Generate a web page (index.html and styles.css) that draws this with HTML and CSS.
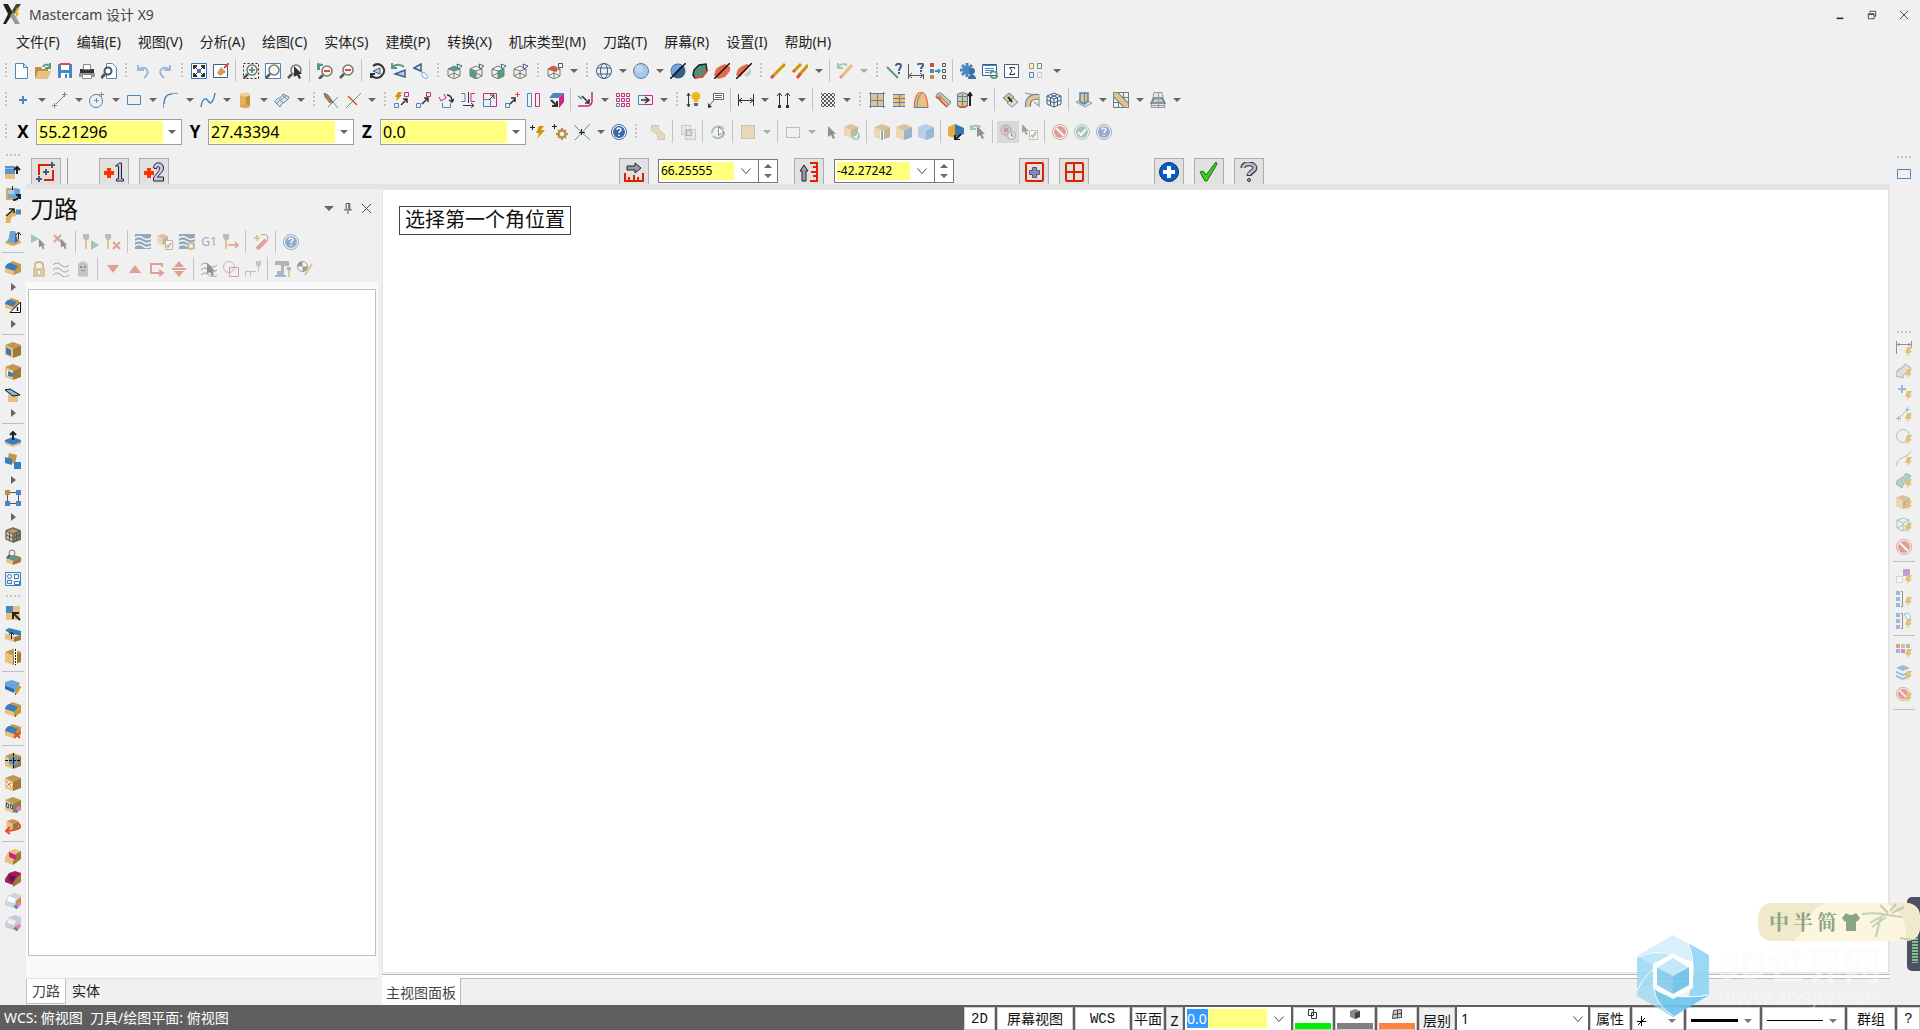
FILE: index.html
```html
<!DOCTYPE html>
<html lang="zh-CN">
<head>
<meta charset="utf-8">
<title>Mastercam 设计 X9</title>
<link rel="stylesheet" href="styles.css">
</head>
<body>
<svg class="sprite" aria-hidden="true">
<defs>
<!-- shared parts -->
<symbol id="cube" viewBox="0 0 16 16"><path fill="#c09850" d="M8 0l8 3-8 4-8-4z"/><path fill="#e8c080" d="M0 3l8 4v9l-8-3z"/><path fill="#a07838" d="M16 3L8 7v9l8-3z"/></symbol>
<symbol id="bolt" viewBox="0 0 16 16"><path fill="#cc9900" d="M11 6h5l-2 4h2l-6 6 2-4H9z"/></symbol>
<symbol id="wirecube" viewBox="0 0 16 16"><path fill="none" stroke="#777" d="M7 3l6 3v7l-6 3-6-3V6zM1 6l6 2 6-2M7 8v8M1 13l6-3 6 3"/></symbol>
<symbol id="mark" viewBox="0 0 16 16"><path fill="#fff" stroke="#3a5f85" d="M10 1l5 2-4 3z"/></symbol>
<symbol id="cursor" viewBox="0 0 16 16"><path fill="#333" d="M6 2v11l3-2 2 4 2-1-2-4h3z"/></symbol>
<symbol id="pen" viewBox="0 0 16 16"><path stroke="#d09a20" stroke-width="3" d="M15 7l-4 7"/><path stroke="#333" d="M11 14l-1 2"/></symbol>
<symbol id="eraser" viewBox="0 0 16 16"><path stroke="#e080b8" stroke-width="4" d="M15 10l-3 3"/><path stroke="#4a86c0" stroke-width="4" d="M12 13l-2 2"/></symbol>
<symbol id="lens" viewBox="0 0 16 16"><circle cx="9" cy="7" r="5" fill="#f6f6f6" stroke="#777" stroke-width="1.5"/><path stroke="#555" stroke-width="2.5" d="M5 11l-4 4"/></symbol>
<!-- file and view -->
<symbol id="new" viewBox="0 0 16 16"><path fill="#fff" stroke="#4a86c0" d="M2.500.5h8l4 4v11h-12zM10.500.5v4h4"/></symbol>
<symbol id="open" viewBox="0 0 16 16"><path fill="#c09040" d="M0 4h6l1 2h6v9H0z"/><path fill="#e8c080" d="M3 8h13l-3 8H0z"/><path fill="none" stroke="#5a9a80" stroke-width="2" d="M8 4c1-3 4-3 6-1M15 0v5h-5"/></symbol>
<symbol id="save" viewBox="0 0 16 16"><path fill="#4a86c0" d="M1 1h14v14H1z"/><path fill="#fff" d="M4 1h8v6H4zM4 10h8v5H4z"/><path fill="#e05030" d="M3 0h10v2H3z"/><path fill="#4a86c0" d="M8 11h2v4H8z"/></symbol>
<symbol id="print" viewBox="0 0 16 16"><path fill="#333" d="M1 6h14v5H1z"/><path fill="#999" d="M0 10h16v4H0z"/><path fill="#fff" stroke="#888" d="M4.500 1.500h7v5h-7zM3.500 11.500h9v4h-9z"/></symbol>
<symbol id="preview" viewBox="0 0 16 16"><path fill="#fff" stroke="#4a86c0" d="M5.500.5h6l4 4v11h-10z"/><circle cx="7" cy="8" r="3.500" fill="#fff" stroke="#555" stroke-width="2"/><path stroke="#555" stroke-width="3" d="M4 11l-4 4"/></symbol>
<symbol id="undo" viewBox="0 0 16 16"><path fill="none" stroke="#4a86c0" stroke-width="2" d="M4 6c8-4 12 3 5 9M3 2v5h6"/></symbol>
<symbol id="redo" viewBox="0 0 16 16"><path fill="none" stroke="#4a86c0" stroke-width="2" d="M12 6C4 2 0 9 7 15M13 2v5H7"/></symbol>
<symbol id="fit" viewBox="0 0 16 16"><path fill="#fff" stroke="#3a76b0" d="M.5.5h15v15H.5z"/><path stroke="#333" d="M3 3l10 10M13 3L3 13"/><path fill="none" stroke="#333" stroke-width="2" d="M3 6V3h3M10 3h3v3M13 10v3h-3M6 13H3v-3"/><path fill="#3a76b0" d="M6 6h4v4H6z"/></symbol>
<symbol id="repaint" viewBox="0 0 16 16"><path fill="#fff" stroke="#3a5f85" d="M.5 1.500h14v13H.5z"/><path fill="#d0a050" d="M8 4l5 5-6 4-3-3z"/><path stroke="#e05030" stroke-width="2" d="M11 5l5-5"/></symbol>
<symbol id="zoomwin" viewBox="0 0 16 16"><path fill="none" stroke="#222" stroke-dasharray="2 2" d="M.5.5h15v15H.5z"/><use href="#lens"/><path stroke="#5a9a80" stroke-width="2" d="M9 4v6M6 7h6"/></symbol>
<symbol id="zoomtgt" viewBox="0 0 16 16"><path fill="#fff" stroke="#4a86c0" d="M.5.5h15v15H.5z"/><use href="#lens"/></symbol>
<symbol id="zoomsel" viewBox="0 0 16 16"><use href="#lens"/><use href="#cursor" x="1" y="1"/></symbol>
<symbol id="unzoom" viewBox="0 0 16 16"><use href="#lens" x="1" y="1"/><path stroke="#e05030" stroke-width="2" d="M7 8h6"/><path fill="#5a9a80" d="M0 0l6 1v2H3v4H0z"/></symbol>
<symbol id="zoomout" viewBox="0 0 16 16"><use href="#lens"/><path stroke="#e05030" stroke-width="2" d="M6 7h6"/></symbol>
<symbol id="rot1" viewBox="0 0 16 16"><path fill="none" stroke="#333" stroke-width="2" d="M4 3c6-5 14 2 10 8-3 5-9 5-12 1M2 15v-4h4"/><path fill="#b8d0e8" stroke="#3a5f85" d="M4 8l7-3v6z"/></symbol>
<symbol id="rot2" viewBox="0 0 16 16"><path fill="none" stroke="#5a9a80" stroke-width="2" d="M1 4c4-3 9-3 12 0M1 0v5h5"/><path fill="#b8d0e8" stroke="#3a5f85" stroke-width="1.500" d="M4 11l10-4v7z"/></symbol>
<symbol id="rot3" viewBox="0 0 16 16"><path fill="#e8eef5" stroke="#3a5f85" stroke-width="1.500" d="M1 5l7-4v7z"/><path fill="#fff" stroke="#7aa6d0" d="M9 9l3 1 3 4-2 2-4-3z"/></symbol>
<symbol id="vtop" viewBox="0 0 16 16"><use href="#wirecube"/><path fill="#5a9a80" d="M7 3l6 3-6 2-6-2z"/><use href="#mark"/></symbol>
<symbol id="vfront" viewBox="0 0 16 16"><use href="#wirecube"/><path fill="#5a9a80" d="M1 6l6 2v8l-6-3z"/><use href="#mark"/></symbol>
<symbol id="vright" viewBox="0 0 16 16"><use href="#wirecube"/><path fill="#5a9a80" d="M13 6L7 8v8l6-3z"/><use href="#mark"/></symbol>
<symbol id="viso" viewBox="0 0 16 16"><use href="#wirecube"/><use href="#mark"/></symbol>
<symbol id="plane" viewBox="0 0 16 16"><use href="#wirecube"/><path fill="#e05030" d="M5 3l5 2v4l-9-3z"/><path fill="#fff" stroke="#555" d="M11.500.5h4v4h-4z"/></symbol>
<symbol id="globe" viewBox="0 0 16 16"><g fill="none" stroke="#3a5f85"><circle cx="8" cy="8" r="7.500"/><ellipse cx="8" cy="8" rx="3.500" ry="7.500"/><path d="M1 5h14M1 11h14"/></g></symbol>
<symbol id="ball" viewBox="0 0 16 16"><circle cx="8" cy="8" r="7.500" fill="#a8c6e6" stroke="#5a7ea5"/><circle cx="6" cy="6" r="4" fill="#bfd7ef"/></symbol>
<symbol id="ballcut" viewBox="0 0 16 16"><circle cx="8" cy="8" r="7.500" fill="#35618f"/><path fill="#70a8dc" d="M2 12C-1 6 4-1 12 2z"/><path stroke="#111" stroke-width="1.500" d="M0 16L16 0"/></symbol>
<symbol id="gem" viewBox="0 0 16 16"><path fill="#50907a" stroke="#222" stroke-width="1.500" d="M2 7l5-5 7-1 1 7-5 6-7 1-2-3z"/><path fill="none" stroke="#e05030" stroke-width="2" d="M15 8l-5 6H3"/></symbol>
<symbol id="hidea" viewBox="0 0 16 16"><path fill="#e56a4a" d="M6 3l5-2 5 3v4l-5 6-7 2-4-4 2-6z"/><path stroke="#111" stroke-width="1.500" d="M0 16L16 0"/></symbol>
<symbol id="hideb" viewBox="0 0 16 16"><path fill="#e56a4a" d="M6 3l5-2 3 2L4 14l-4-2 2-6z"/><path fill="#ccc" d="M8 12l7-7v6l-4 3z"/><path stroke="#111" stroke-width="1.500" d="M0 16L16 0"/></symbol>
<symbol id="del" viewBox="0 0 16 16"><path stroke="#cc9900" stroke-width="3" d="M15 1L4 12"/><path stroke="#e05030" stroke-width="3" d="M4 12l-3 3"/></symbol>
<symbol id="del2" viewBox="0 0 16 16"><path stroke="#cc9900" stroke-width="3" d="M9 1L3 7M16 2L9 10"/><path stroke="#e05030" stroke-width="3" d="M3 7l-2 2M9 10l-4 5"/></symbol>
<symbol id="undel" viewBox="0 0 16 16"><path stroke="#cc9900" stroke-width="3" d="M15 2L6 12"/><path stroke="#e05030" stroke-width="3" d="M6 12l-3 3"/><path fill="none" stroke="#5a9a80" stroke-width="2" d="M1 0v5h5M1 4c3-4 6-3 9-2"/></symbol>
<symbol id="anaent" viewBox="0 0 16 16"><path stroke="#5a9a80" stroke-width="2" d="M1 4l11 11"/><path fill="none" stroke="#3a5f85" stroke-width="2" d="M10 3c0-3 5-3 5 0 0 2-2 2-2 5M13 9v2"/></symbol>
<symbol id="anadist" viewBox="0 0 16 16"><path fill="none" stroke="#555" d="M.5 1v15M15.500 11v5M2 12.500h12M4 10l-3 2.500L4 15M12 10l3 2.500-3 2.500"/><path fill="none" stroke="#3a5f85" stroke-width="2" d="M10 2c0-2 5-2 5 0 0 2-2 2-2 4M13 7v2"/></symbol>
<symbol id="anachg" viewBox="0 0 16 16"><path fill="#d05030" d="M0 0h4v4H0z"/><path fill="#4a86c0" d="M0 6h4v4H0zM5 7h3V5l3 3-3 3V9H5z"/><path fill="#c09040" d="M0 12h4v4H0z"/><path fill="none" stroke="#555" d="M12.500.5h3v3h-3zM12.500 6.500h3v3h-3zM12.500 12.500h3v3h-3z"/></symbol>
<symbol id="config" viewBox="0 0 16 16"><g stroke="#4a86c0" stroke-width="3"><path d="M7 0v14M0 7h14M2 2l10 10M12 2L2 12"/></g><circle cx="12" cy="8" r="3" fill="#3a6fa5"/><path fill="#3a6fa5" d="M8 16c0-6 8-6 8 0z"/></symbol>
<symbol id="runapp" viewBox="0 0 16 16"><path fill="#fff" stroke="#3a5f85" d="M.5 1.500h14v11H.5z"/><path stroke="#4a86c0" d="M0 2.500h15M3 5.500h9M3 7.500h9M3 9.500h4"/><path fill="none" stroke="#5a9a80" stroke-width="2" d="M8 11c2-4 6-3 7 0M16 12c-2 4-6 4-7 1"/></symbol>
<symbol id="sigma" viewBox="0 0 16 16"><path fill="#fff" stroke="#3a5f85" d="M.5 1.500h14v13H.5z"/><path fill="none" stroke="#333" d="M10.500 6V4.500h-5L8 8l-2.500 3.500h5V10"/></symbol>
<symbol id="grid4" viewBox="0 0 16 16"><g fill="none"><path stroke="#c09040" d="M1.500.5h4v5h-4z"/><path stroke="#5a9a80" d="M9.500.5h4v5h-4z"/><path stroke="#4a86c0" d="M1.500 9.500h4v5h-4z"/><path stroke="#ccc" d="M9.500 9.500h4v5h-4z"/></g></symbol>
<!-- sketch and transform -->
<symbol id="point" viewBox="0 0 16 16"><path stroke="#4a86c0" stroke-width="2" d="M8 4v8M4 8h8"/></symbol>
<symbol id="line" viewBox="0 0 16 16"><path stroke="#4a86c0" d="M4 12l9-9"/><path stroke="#888" d="M12.500 0v5M10 2.500h5M2.500 11v5M0 13.500h5"/></symbol>
<symbol id="circle" viewBox="0 0 16 16"><circle cx="7" cy="9" r="6.500" fill="none" stroke="#4a86c0"/><path stroke="#888" d="M7.500 6v5M5 8.500h5M12.500 0v5M10 2.500h5"/></symbol>
<symbol id="rect" viewBox="0 0 16 16"><path fill="none" stroke="#4a86c0" d="M1.500 3.500h13v9h-13z"/></symbol>
<symbol id="fillet" viewBox="0 0 16 16"><path fill="none" stroke="#4a86c0" stroke-width="1.500" d="M1 12C1 5 4 2 9 2"/><path stroke="#999" d="M.5 11v5M8 1.500h7"/></symbol>
<symbol id="spline" viewBox="0 0 16 16"><path fill="none" stroke="#4a86c0" stroke-width="1.500" d="M1 15C3 3 7 7 9 10s5-2 6-9"/></symbol>
<symbol id="cyl" viewBox="0 0 16 16"><path fill="#e0b060" d="M3 2h10v12H3z"/><path fill="#c09040" d="M9 2h4v12H9z"/><ellipse cx="8" cy="14" rx="5" ry="2" fill="#d8a858"/><ellipse cx="8" cy="2.500" rx="5" ry="2" fill="#f0d098"/></symbol>
<symbol id="surf" viewBox="0 0 16 16"><path fill="#dce6f0" stroke="#4a86c0" d="M1 10c1-5 6-2 8-8l6 3c-2 6-7 4-9 10z"/><path fill="none" stroke="#888" d="M3 12c2-6 6-3 9-9M5 8l5 3M9 4l4 3"/></symbol>
<symbol id="trim" viewBox="0 0 16 16"><path stroke="#5a9a80" d="M15 5L5 15M9 9l6 7"/><path fill="#a08050" stroke="#777" d="M1 1l4 2 5 7-3 1-5-6z"/></symbol>
<symbol id="break" viewBox="0 0 16 16"><path stroke="#5a9a80" d="M16 1L1 16"/><path stroke="#e05030" stroke-width="1.500" d="M3 4l9 9"/></symbol>
<symbol id="xdyn" viewBox="0 0 16 16"><path fill="#cc9900" d="M4 0h4L6 3h2L2 9l1-4H1z"/><path fill="none" stroke="#c8287d" d="M10.500.5h4v4h-4z"/><path fill="none" stroke="#4a86c0" d="M.5 11.500h4v4h-4z"/><path fill="none" stroke="#333" stroke-width="1.500" d="M7 13l6-6M9 7h4v4"/></symbol>
<symbol id="xmove" viewBox="0 0 16 16"><path fill="none" stroke="#c8287d" d="M10.500.5h4v4h-4z"/><path fill="none" stroke="#4a86c0" d="M.5 11.500h4v4h-4z"/><path fill="none" stroke="#333" stroke-width="1.500" d="M6 12l6-6M8 6h4v4"/></symbol>
<symbol id="xrot" viewBox="0 0 16 16"><path fill="none" stroke="#c8287d" d="M1 5l2 4 5-3-2-4"/><path fill="none" stroke="#4a86c0" d="M4.500 11v4.500h8V11"/><path fill="none" stroke="#333" stroke-width="1.500" d="M9 3c4 0 5 3 5 7M11 8l3 2 2-3"/></symbol>
<symbol id="xmir" viewBox="0 0 16 16"><path fill="none" stroke="#4a86c0" d="M1 1.500h4v8H1"/><path fill="none" stroke="#c8287d" d="M15 1.500h-4v8h4"/><path fill="none" stroke="#333" d="M8.500 0v11M3 13.500h10M11 11l3 2.500-3 2.500"/></symbol>
<symbol id="xscale" viewBox="0 0 16 16"><path fill="none" stroke="#c8287d" d="M1.500 1.500h13v13h-13z"/><path fill="none" stroke="#4a86c0" d="M1.500 7.500h7v7h-7z"/><path fill="none" stroke="#333" d="M7 8l5-5M8 3h4v4"/></symbol>
<symbol id="xorigin" viewBox="0 0 16 16"><path fill="none" stroke="#4a86c0" d="M1.500 11.500h4v4h-4z"/><path fill="none" stroke="#333" stroke-width="1.500" d="M6 12l5-5M7 6h4v4"/><path stroke="#e05030" d="M13.500 0v5M11 2.500h5"/></symbol>
<symbol id="xoff" viewBox="0 0 16 16"><path fill="none" stroke="#4a86c0" d="M1.500 1.500h4v13h-4z"/><path fill="none" stroke="#c8287d" d="M9.500 1.500h4v13h-4z"/></symbol>
<symbol id="xproj" viewBox="0 0 16 16"><path fill="#4a86c0" d="M5 1h11l-5 5H1z"/><path fill="#c8287d" d="M16 1v9l-5 6V6z"/><path fill="none" stroke="#333" stroke-width="2" d="M3 8l6 6M9 9v5H4"/></symbol>
<symbol id="xwrap" viewBox="0 0 16 16"><path fill="none" stroke="#c8287d" stroke-width="1.500" d="M14 0v10q-1 4-5 4H0"/><path stroke="#4a86c0" stroke-width="1.500" d="M0 4l4 3"/><path fill="none" stroke="#333" stroke-width="1.500" d="M4 4l7 7M11 7v4H7"/></symbol>
<symbol id="xarr" viewBox="0 0 16 16"><path fill="none" stroke="#c8287d" d="M1.500 1.500h3v3h-3zM6.500 1.500h3v3h-3zM11.500 1.500h3v3h-3zM1.500 6.500h3v3h-3zM6.500 6.500h3v3h-3zM11.500 6.500h3v3h-3zM6.500 11.500h3v3h-3zM11.500 11.500h3v3h-3z"/><path fill="none" stroke="#4a86c0" d="M1.500 11.500h3v3h-3z"/></symbol>
<symbol id="xstr" viewBox="0 0 16 16"><path fill="none" stroke="#4a86c0" d="M1 3.500h7M1.500 3v10M1 12.500h7"/><path fill="none" stroke="#c8287d" d="M8 3.500h7.500v9H8"/><path fill="none" stroke="#333" stroke-width="1.500" d="M4 8h7M8 5l4 3-4 3"/></symbol>
<symbol id="smart" viewBox="0 0 16 16"><path fill="none" stroke="#333" d="M2.500 2v12M1 4l1.500-3L4 4M1 12l1.500 3L4 12"/><path fill="#f0b820" d="M10 0c5 0 6 6 2 8v2H8V8C4 6 5 0 10 0z"/><path fill="#666" d="M8 11h4v3H8z"/></symbol>
<symbol id="note" viewBox="0 0 16 16"><path fill="#fff" stroke="#666" d="M5.500 1.500h10v6h-10z"/><path stroke="#666" d="M7 3.500h7M7 5.500h7M6 8l-5 6"/><path fill="#333" d="M0 16v-5l4 4z"/></symbol>
<symbol id="dimh" viewBox="0 0 16 16"><path fill="none" stroke="#333" d="M.5 2v12M15.500 2v12M1 8.500h14M4 6L1 8.500 4 11M12 6l3 2.500-3 2.500"/></symbol>
<symbol id="dimv" viewBox="0 0 16 16"><path fill="none" stroke="#333" d="M4.500 1v13M12.500 1v13M2 4l2.500-3L7 4M10 4l2.500-3L15 4"/><path fill="#333" d="M3 13h3v3H3zM11 13h3v3h-3z"/></symbol>
<pattern id="chk" width="4" height="4" patternUnits="userSpaceOnUse"><path fill="#555" d="M0 0h2v2H0zM2 2h2v2H2z"/></pattern>
<symbol id="hatch" viewBox="0 0 16 16"><path fill="url(#chk)" d="M1 1h14v14H1z"/></symbol>
<!-- surfaces -->
<symbol id="s1" viewBox="0 0 16 16"><path fill="#e8c080" d="M1 1h14v14H1z"/><path stroke="#4a86c0" d="M1.500 0v16M14.500 0v16M0 1.500h16M0 14.500h16M8.500 2v12M2 8.500h12"/></symbol>
<symbol id="s2" viewBox="0 0 16 16"><path fill="#e8c080" d="M2 2h12v12H2z"/><path stroke="#4a86c0" d="M2 2.500h12M2 14.500h12M2 6.500h12M2 10.500h12"/><path stroke="#a07838" d="M8.500 3v11"/></symbol>
<symbol id="s3" viewBox="0 0 16 16"><path fill="#e8c080" stroke="#e05030" d="M1 15.500C2 3 5 0 8 0s6 3 7 15.500z"/><path fill="none" stroke="#4a86c0" d="M1 15.500h14M8.500 1C5 5 4 10 4 15"/></symbol>
<symbol id="s4" viewBox="0 0 16 16"><path fill="#e8c080" stroke="#4a86c0" d="M1 5c0-4 4-5 6-3l9 8-4 5z"/><path fill="none" stroke="#e05030" stroke-width="1.500" d="M1 6c3-2 4 0 5 3l6 6"/><path stroke="#4a86c0" d="M4 3l10 10"/></symbol>
<symbol id="s5" viewBox="0 0 16 16"><path fill="#e8c080" stroke="#4a86c0" d="M.5 2q5-3 10 0v12q-5 2-10 0z"/><path fill="none" stroke="#4a86c0" d="M1 4.500h9M1 9.500h9M5.500 2v12"/><path fill="none" stroke="#e05030" stroke-width="1.500" d="M1 14q4 3 9 0"/><path fill="none" stroke="#222" stroke-width="2" d="M13 14V2M11 4l2-3 2 3"/></symbol>
<symbol id="s6" viewBox="0 0 16 16"><path fill="#e8c080" stroke="#4a86c0" d="M1 6l6-5 5 4-6 5z"/><path fill="#ddd" stroke="#888" d="M5 11l6-5 5 4-6 5z"/><path stroke="#222" stroke-width="2" d="M6 5l4 5"/></symbol>
<symbol id="s7" viewBox="0 0 16 16"><path fill="none" stroke="#aaa" stroke-width="1.500" d="M1 1l14 3v10l-5-4"/><path fill="none" stroke="#4a86c0" stroke-width="6" d="M4 15C3 8 7 4 15 5"/><path fill="none" stroke="#e8c080" stroke-width="4" d="M4 15C3 8 7 4 15 5"/></symbol>
<symbol id="s8" viewBox="0 0 16 16"><path fill="#eef3f8" stroke="#3a5f85" d="M8 1l7 3v8l-7 3-7-3V4zM1 4l7 3 7-3M8 7v8M1 8l7 3 7-3M4.500 5.500v8M11.500 5.500v8M4.500 2.500l7 3M11.500 2.500l-7 3"/></symbol>
<symbol id="s9" viewBox="0 0 16 16"><path fill="#ddd" stroke="#999" d="M0 10l7-3 9 4-7 4z"/><path fill="#e8c080" stroke="#4a86c0" stroke-width="1.500" d="M4 1h8v8l-4 3-4-2z"/><path stroke="#4a86c0" d="M8.500 1v10"/></symbol>
<symbol id="s10" viewBox="0 0 16 16"><path fill="none" stroke="#777" d="M.5.5h15v15H.5zM.5 5.500h15M.5 10.500h15M5.500.5v15M10.500.5v15"/><path stroke="#4a86c0" stroke-width="7" d="M2 2l12 12"/><path stroke="#e8c080" stroke-width="5" d="M2 2l12 12"/></symbol>
<symbol id="s11" viewBox="0 0 16 16"><path fill="#e8e8e8" stroke="#999" d="M4 .5h8l3 15H1z"/><path fill="#e8c080" stroke="#4a86c0" stroke-width="1.500" d="M4 6h8l3 5H1z"/><path stroke="#999" d="M8.500 0v16M1 13.500h14"/></symbol>
<!-- selection -->
<symbol id="autocur" viewBox="0 0 16 16"><path stroke="#222" d="M2.500 1v5M0 3.500h5"/><path fill="#cc9900" d="M9 2h5l-3 4h4l-8 9 2-6H6z"/></symbol>
<symbol id="curset" viewBox="0 0 16 16"><path stroke="#222" d="M2.500 0v5M0 2.500h5"/><circle cx="10" cy="10" r="3.500" fill="none" stroke="#b89048" stroke-width="2.500"/><path stroke="#b89048" stroke-width="2" d="M10 4v2M10 14v2M4 10h2M14 10h2M6 6l1 1M13 13l1 1M14 6l-1 1M6 14l1-1"/></symbol>
<symbol id="curx" viewBox="0 0 16 16"><path stroke="#5a9a80" d="M0 1l16 15M16 0L1 16"/><path stroke="#222" d="M7.500 5v6M5 8.500h6"/></symbol>
<symbol id="help" viewBox="0 0 16 16"><circle cx="8" cy="8" r="7.500" fill="#fff" stroke="#3a6aa5"/><circle cx="8" cy="8" r="6" fill="#3a6aa5"/><path fill="none" stroke="#fff" stroke-width="1.500" d="M6 6c0-3 4-2 4 0 0 1-2 1-2 3M8 10.500v1.500"/></symbol>
<symbol id="selchain" viewBox="0 0 16 16"><path fill="#e8c080" stroke="#888" stroke-dasharray="2 1" d="M1.500 1.500h7v4l6 5v5h-7v-5l-6-4z"/></symbol>
<symbol id="selin" viewBox="0 0 16 16"><path fill="#ddd" stroke="#888" stroke-dasharray="2 1" d="M1.500 1.500h9v9h-9zM5.500 5.500h10v10h-10z"/><path fill="#e0c090" stroke="#777" d="M6.500 6.500h5v5h-5z"/></symbol>
<symbol id="selcyc" viewBox="0 0 16 16"><path fill="none" stroke="#5a9a80" stroke-width="2" d="M2 9c0-6 7-9 12-4M14 8c0 6-7 8-11 4"/><path fill="#fff" stroke="#333" d="M8.500 2.500v9l2-2 2 3 1-1-1-3h2z"/></symbol>
<symbol id="selbox" viewBox="0 0 16 16"><path fill="#e8c080" stroke="#777" stroke-dasharray="2 1" d="M1.500 1.500h13v13h-13z"/></symbol>
<symbol id="selwin" viewBox="0 0 16 16"><path fill="none" stroke="#555" stroke-dasharray="2 1" d="M1.500 3.500h13v10h-13z"/></symbol>
<symbol id="okdot" viewBox="0 0 16 16"><circle cx="12" cy="12" r="4" fill="#5a9a80"/><path fill="none" stroke="#fff" stroke-width="1.500" d="M10 12l2 2 2-4"/></symbol>
<symbol id="verify" viewBox="0 0 16 16"><use href="#cube" width="14" height="14"/><use href="#okdot"/></symbol>
<symbol id="seledge" viewBox="0 0 16 16"><use href="#cube"/><path stroke="#fff" stroke-width="4" d="M8 7v9"/><path stroke="#3a5f85" stroke-width="2" d="M8 7v9"/></symbol>
<symbol id="selface" viewBox="0 0 16 16"><use href="#cube"/><path fill="#4a76a5" d="M16 3L8 7v9l8-3z"/></symbol>
<symbol id="selbody" viewBox="0 0 16 16"><path fill="#7fb0e0" d="M8 0l8 3v10l-8 3-8-3V3z"/><path fill="#4a80b8" d="M16 3L8 7v9l8-3z"/></symbol>
<symbol id="selback" viewBox="0 0 16 16"><path fill="#e8a840" d="M0 3l7-3v14l-7-2z"/><path fill="#3a76b0" d="M7 0l9 4v6l-9 3z"/><path fill="none" stroke="#222" stroke-width="2" d="M8 15l5-5M7 11v5h5"/></symbol>
<symbol id="sellast" viewBox="0 0 16 16"><path fill="none" stroke="#5a9a80" stroke-width="2" d="M1 1v4h5M1 4c4-4 7-3 10-1"/><use href="#cursor" x="1"/></symbol>
<symbol id="selwait" viewBox="0 0 16 16"><circle cx="6" cy="6" r="5" fill="#e8c080" stroke="#4a86c0"/><circle cx="6" cy="6" r="2" fill="#4a86c0" stroke="#e05030"/><circle cx="11.500" cy="11.500" r="4" fill="#fff" stroke="#777"/><path fill="none" stroke="#333" d="M11.500 9v3h2"/></symbol>
<symbol id="selclip" viewBox="0 0 16 16"><path fill="#555" d="M0 0v9l2-2 2 4 2-1-2-3h3z"/><path fill="#fff" stroke="#c09040" d="M7.500 6.500h8v9h-8z"/><path fill="none" stroke="#5a9a80" stroke-width="2" d="M9 11l2 2 3-5"/></symbol>
<symbol id="no" viewBox="0 0 16 16"><circle cx="8" cy="8" r="7.500" fill="#fff" stroke="#d05038"/><circle cx="8" cy="8" r="6" fill="#d05038"/><path stroke="#fff" stroke-width="2" d="M4 4l8 8"/></symbol>
<symbol id="ok" viewBox="0 0 16 16"><circle cx="8" cy="8" r="7.500" fill="#fff" stroke="#5a9a80"/><circle cx="8" cy="8" r="6" fill="#5a9a80"/><path fill="none" stroke="#fff" stroke-width="2" d="M4 8l3 3 5-6"/></symbol>
<!-- solids bar -->
<symbol id="extr" viewBox="0 0 16 16"><path fill="#e8c080" d="M0 9h10v6H0z"/><path fill="#5a96d0" d="M0 2h10v8H0z"/><path fill="#90bce6" d="M0 4h10v1H0z"/><path fill="none" stroke="#222" stroke-width="2" d="M12 10V4M9 6l3-3 3 3"/></symbol>
<symbol id="revo" viewBox="0 0 16 16"><path fill="#d8a858" d="M1 2h12v12H1z"/><path fill="#6aa4dc" d="M3 3h12v9H3z"/><path fill="#a8ccee" d="M3 4h6v4H3z"/><path stroke="#222" d="M7.500 0v4"/><path fill="none" stroke="#222" stroke-width="2" d="M8 14q5 0 6-4M11 9h4v4"/></symbol>
<symbol id="sweep" viewBox="0 0 16 16"><path fill="none" stroke="#e0b468" stroke-width="5" d="M3 15c0-7 3-10 8-9"/><path stroke="#4a86c0" stroke-width="5" d="M11 4h5"/><path fill="none" stroke="#222" stroke-width="1.500" d="M1 8l7-6M4 1h5v4"/></symbol>
<symbol id="loft" viewBox="0 0 16 16"><path fill="#d8a858" d="M0 13l3-4h11l2 4-8 3z"/><path fill="#6aa4dc" d="M5 1h5v12l-7-1z"/><path fill="#3a6aa5" d="M10 1l3 10-3 2z"/><path fill="none" stroke="#222" d="M13.500 9V3M11 5l2.500-3L16 5"/></symbol>
<symbol id="fil" viewBox="0 0 16 16"><path fill="#c09850" d="M7 1l9 3v8l-7 3-9-3V7z"/><path fill="#3a7cc0" d="M0 8c1-4 3-5 5-5l8 3-4 5z"/><path fill="#e8c080" d="M0 8l9 3v4l-9-3z"/></symbol>
<symbol id="cham" viewBox="0 0 16 16"><use href="#fil" width="14" height="14"/><path fill="#fff" stroke="#111" d="M15.500 5v10.500H5z"/><path stroke="#111" stroke-width="1.500" d="M12.500 10v4"/></symbol>
<symbol id="shell" viewBox="0 0 16 16"><use href="#cube"/><path fill="#3a7cc0" d="M1 5l5 3v6l-5-2z"/></symbol>
<symbol id="bool" viewBox="0 0 16 16"><use href="#cube"/><path fill="#fff" d="M2 6l6 2v5l-6-2z"/><path fill="#3a7cc0" d="M3 7l5 2v4l-5-1z"/></symbol>
<symbol id="draft" viewBox="0 0 16 16"><path fill="#e8c080" d="M3 8l10 2v6H3z"/><path fill="#8cb8e0" stroke="#111" d="M0 4l5-1 10 6-7 1z"/></symbol>
<symbol id="push" viewBox="0 0 16 16"><path fill="#e8c080" d="M0 11l8 3 8-3v2l-8 3-8-3z"/><path fill="#3a7cc0" d="M0 9l8-3 8 3v2l-8 3-8-3z"/><path fill="none" stroke="#222" stroke-width="2" d="M8 9V2M5 4l3-3 3 3"/></symbol>
<symbol id="move" viewBox="0 0 16 16"><path fill="#c09850" d="M4 0l8 2-2 9-8-2z"/><path fill="#3a7cc0" d="M0 4l7 2v6l-7-2zM9 9h7v7H9z"/></symbol>
<symbol id="nodes" viewBox="0 0 16 16"><path fill="none" stroke="#555" d="M2.500 2.500h11v11h-11z"/><path fill="#c09040" d="M0 0h5v5H0z"/><path fill="#4a86c0" d="M11 0h5v5h-5zM0 11h5v5H0zM11 11h5v5h-5z"/></symbol>
<symbol id="mesh" viewBox="0 0 16 16"><use href="#cube"/><path fill="none" stroke="#3a5f85" d="M8 1l7 3v8l-7 3-7-3V4zM1 4l7 3 7-3M8 7v8M1 8l7 3 7-3M4.500 5.500v8M11.500 5.500v8"/></symbol>
<symbol id="find" viewBox="0 0 16 16"><path fill="#5a9a80" d="M1 9l8-3 7 2-8 4z"/><path fill="#e8c080" d="M1 9l7 3v4l-7-3z"/><path fill="#a07838" d="M8 12l8-4v5l-8 3z"/><circle cx="7" cy="4" r="3" fill="#eee" stroke="#777"/><path stroke="#555" stroke-width="2" d="M5 6L2 9"/></symbol>
<symbol id="layout" viewBox="0 0 16 16"><g fill="none" stroke="#3a7cc0"><path d="M.5 1.500h15v13H.5z"/><circle cx="4.500" cy="5.500" r="2"/><path d="M9.500 3.500h4v4h-4zM2.500 9.500h4v3h-4zM9.500 10.500h5v3h-5z"/></g></symbol>
<symbol id="four" viewBox="0 0 16 16"><path fill="#4a86c0" d="M1 1h7v7H1z"/><path fill="#e8c080" d="M8 1h7v14H1V8h7z"/><path fill="none" stroke="#222" stroke-width="2" d="M15 15L9 9M8 14V8h6"/></symbol>
<symbol id="p1" viewBox="0 0 16 16"><path fill="#3a7cc0" d="M0 3l4-2 12 3v5L4 6z"/><path fill="#e8c080" d="M0 6l9 4v5l-9-3z"/><path fill="#a07838" d="M9 10l7-2v5l-7 2z"/><path fill="none" stroke="#222" d="M6.500 12V6M4 8l2.500-3L9 8"/></symbol>
<symbol id="p2" viewBox="0 0 16 16"><use href="#cube"/><path stroke="#fff" stroke-width="3" d="M10.500 0v16"/><path stroke="#111" stroke-dasharray="2 1" d="M10.500 0v16"/></symbol>
<symbol id="e1" viewBox="0 0 16 16"><path fill="#6aa4dc" d="M0 3l7-2 8 3-2 4-3 5-10-4z"/><path fill="#2f6aa8" d="M0 7l9 3v4l-9-4z"/><use href="#pen"/></symbol>
<symbol id="e2" viewBox="0 0 16 16"><use href="#fil"/><use href="#pen"/></symbol>
<symbol id="e3" viewBox="0 0 16 16"><use href="#fil"/><path stroke="#e05030" stroke-width="2" d="M9 9l6 6M15 9l-6 6"/></symbol>
<symbol id="h1" viewBox="0 0 16 16"><use href="#cube"/><path fill="#6a9ac0" d="M4 4h9v7l-5 2-4-2z"/><path stroke="#111" stroke-dasharray="3 1" d="M8.500 0v16M0 7.500h16"/></symbol>
<symbol id="h2" viewBox="0 0 16 16"><use href="#cube"/><path stroke="#fff" stroke-width="3" d="M2 7l4 5M6 8l-4 3"/><path stroke="#e05030" d="M2 7l4 5M6 8l-4 3"/></symbol>
<symbol id="h3" viewBox="0 0 16 16"><use href="#cube"/><path fill="#a8d0f0" stroke="#3a5f85" d="M1.500 6l2 1v4l-2-1zM5.500 7l2 1v4l-2-1z"/><use href="#eraser"/></symbol>
<symbol id="h4" viewBox="0 0 16 16"><use href="#cube" x="1" width="13" height="12"/><path fill="none" stroke="#e05030" stroke-width="2" d="M13 4c5 5 1 7-11 8M5 8l-4 4 4 3"/></symbol>
<symbol id="m1" viewBox="0 0 16 16"><path fill="#e8c080" d="M0 8l4-6 6-2 6 2v8l-8 6-8-3z"/><path fill="#a07838" d="M16 2v8l-8 6v-4l3-2V5z"/><path fill="#c8287d" d="M4 3l7 3v5L4 8z"/></symbol>
<symbol id="m2" viewBox="0 0 16 16"><path fill="#a01868" d="M0 8l4-6 6-2 6 2v4l-8 8-8-3z"/><path fill="#701048" d="M4 3l7 3-2 5-5-2z"/><path fill="#a07838" d="M16 3v8l-8 5v-4l3-5z"/></symbol>
<symbol id="m3" viewBox="0 0 16 16"><path fill="#d0d4d8" d="M0 8l4-6 6-2 6 2v8l-8 5-8-3z"/><path fill="#fff" d="M4 3l7 3-2 4-7-2z"/><path fill="#c09040" d="M16 4v7l-5 2V8z"/><use href="#eraser"/></symbol>
<symbol id="m4" viewBox="0 0 16 16"><path fill="#c8ccd2" d="M0 8l4-6 6-2 6 2v8l-8 5-8-3z"/><path fill="#eee" d="M4 3l7 3-2 4-7-2z"/><use href="#eraser"/></symbol>
<!-- toolpath manager -->
<symbol id="t1" viewBox="0 0 16 16"><path fill="#5a9a80" d="M0 0l8 5-8 4z"/><use href="#cursor" x="3" y="3" width="13" height="13"/></symbol>
<symbol id="t2" viewBox="0 0 16 16"><path stroke="#d05038" stroke-width="2" d="M1 1l7 7M8 1L1 8"/><use href="#cursor" x="3" y="3" width="13" height="13"/></symbol>
<symbol id="tool" viewBox="0 0 16 16"><path fill="#888" d="M0 0h6v4L5 6H2L0 4z"/><path stroke="#c8a030" stroke-width="2" d="M3 6v9"/></symbol>
<symbol id="t3" viewBox="0 0 16 16"><use href="#tool"/><path fill="#5a9a80" d="M8 6l8 5-8 5z"/></symbol>
<symbol id="t4" viewBox="0 0 16 16"><use href="#tool"/><path stroke="#d05038" stroke-width="2" d="M8 8l7 7M15 8l-7 7"/></symbol>
<symbol id="t5" viewBox="0 0 16 16"><path fill="#3a5f85" d="M0 0h16v15H0z"/><path fill="none" stroke="#fff" stroke-width="1.500" d="M0 4q4-3 8 0t8 0M0 8q4-3 8 0t8 0M0 12q4-3 8 0t8 0"/></symbol>
<symbol id="t6" viewBox="0 0 16 16"><use href="#cube" width="11" height="11"/><path fill="#fff" stroke="#a07838" d="M8.500 6.500h7v9h-7z"/><path fill="none" stroke="#5a9a80" stroke-width="2" d="M10 11l1 2 3-4"/></symbol>
<symbol id="t7" viewBox="0 0 16 16"><use href="#t5"/><circle cx="12" cy="12" r="3" fill="#eee" stroke="#b08840" stroke-width="2"/></symbol>
<symbol id="t9" viewBox="0 0 16 16"><use href="#tool"/><path fill="none" stroke="#d05038" stroke-width="1.500" d="M5 11h10M12 8l3 3-3 3"/></symbol>
<symbol id="t10" viewBox="0 0 16 16"><path stroke="#d05038" stroke-width="4" d="M13 6l-9 9"/><path fill="none" stroke="#555" d="M8 1c6-2 8 2 6 6"/><path stroke="#c8a030" stroke-width="2" d="M4 1v6M1 4h6"/></symbol>
<symbol id="lock" viewBox="0 0 16 16"><path fill="none" stroke="#b08840" stroke-width="2" d="M4 7V4c0-4 8-4 8 0v3"/><path fill="#c8a050" d="M2 7h12v9H2z"/><path stroke="#fff" stroke-width="2" d="M8 10v3"/></symbol>
<symbol id="waves" viewBox="0 0 16 16"><path fill="none" stroke="#3a5f85" d="M0 4q4-4 8 0t8 0M0 9q4-4 8 0t8 0M0 14q4-4 8 0t8 0"/></symbol>
<symbol id="ghost" viewBox="0 0 16 16"><path fill="#999" d="M3 16V5c0-6 10-6 10 0v11l-2-1-1 1-2-1-2 1-1-1z"/><path fill="#333" d="M5 5h2v2H5zM9 5h2v2H9zM6 9h4v1H6z"/></symbol>
<symbol id="dn" viewBox="0 0 16 16"><path fill="#d05038" d="M2 4h12l-6 8z"/></symbol>
<symbol id="up" viewBox="0 0 16 16"><path fill="#d05038" d="M2 12h12L8 4z"/></symbol>
<symbol id="ins" viewBox="0 0 16 16"><path fill="none" stroke="#d05038" stroke-width="2" d="M13 6V3H2v9h11M10 9l4 3-4 3"/></symbol>
<symbol id="split" viewBox="0 0 16 16"><path fill="#d05038" d="M3 6h10L8 0zM3 10h10l-5 6zM1 7h14v2H1z"/></symbol>
<symbol id="w1" viewBox="0 0 16 16"><use href="#waves"/><use href="#cursor"/></symbol>
<symbol id="w2" viewBox="0 0 16 16"><circle cx="6" cy="6" r="5.500" fill="none" stroke="#888"/><path fill="none" stroke="#d05038" d="M6.500 6.500h9v9h-9z"/></symbol>
<symbol id="w3" viewBox="0 0 16 16"><path fill="none" stroke="#b08840" d="M.5 15v-4.500H11M5.500 10v5"/><path fill="#999" d="M11 0h5v4l-2 2v5h-1V6l-2-2z"/></symbol>
<symbol id="w4" viewBox="0 0 16 16"><path fill="#777" d="M0 0h14v5H9v5H6V4H0zM0 14h11v2H0z"/><path fill="#4a86c0" d="M2 10h7v4H2z"/><path fill="#777" d="M12 6h4v3h-4z"/><path stroke="#c8a030" stroke-width="2" d="M14 9v7"/></symbol>
<symbol id="w5" viewBox="0 0 16 16"><circle cx="5.500" cy="5.500" r="5" fill="#fff" stroke="#444"/><path fill="#444" d="M5.500.5v5h-5c0-3 2-5 5-5zM5.500 10.500v-5h5c0 3-2 5-5 5z"/><path stroke="#d09a20" stroke-width="2" d="M15 3L8 14"/></symbol>
<!-- quick masks -->
<symbol id="q1" viewBox="0 0 16 16"><path stroke="#333" d="M.5 0v13M15.500 0v6M1 3.500h14M3 2v3M13 2v3"/><use href="#bolt"/></symbol>
<symbol id="q2" viewBox="0 0 16 16"><path fill="#ccc" stroke="#777" d="M0 13c0-8 6-5 9-12l6 4c-3 5-7 4-8 10z"/><path fill="none" stroke="#5a9a80" d="M0 10c2-6 6-3 9-9"/><use href="#bolt"/></symbol>
<symbol id="q3" viewBox="0 0 16 16"><path stroke="#4a86c0" stroke-width="2" d="M6 0v8M2 4h8"/><use href="#bolt"/></symbol>
<symbol id="q4" viewBox="0 0 16 16"><path stroke="#5a9a80" d="M3 11l8-8"/><path stroke="#4a86c0" d="M11.500 0v5M9 2.500h5M2.500 9v5M0 11.500h5"/><use href="#bolt"/></symbol>
<symbol id="q5" viewBox="0 0 16 16"><circle cx="7" cy="7" r="6.500" fill="none" stroke="#5a9a80"/><use href="#bolt"/></symbol>
<symbol id="q6" viewBox="0 0 16 16"><path fill="none" stroke="#5a9a80" d="M.5 15C2 4 8 10 15 0"/><use href="#bolt"/></symbol>
<symbol id="q7" viewBox="0 0 16 16"><path fill="#70b09a" stroke="#3f806a" d="M0 11c1-7 7-4 10-11l5 3c-3 5-7 5-9 12z"/><use href="#bolt"/></symbol>
<symbol id="q8" viewBox="0 0 16 16"><use href="#cube" width="14" height="14"/><use href="#bolt"/></symbol>
<symbol id="q9" viewBox="0 0 16 16"><path fill="none" stroke="#5a9a80" d="M7 1l6 2v8l-6 3-6-3V3zM1 3l6 3 6-3M7 6v8M1 11l6-3 6 3"/><use href="#bolt"/></symbol>
<symbol id="q11" viewBox="0 0 16 16"><path fill="#8a50b0" d="M7 0h7v7H7z"/><path fill="#fff" stroke="#bbb" d="M.5 7.500h6v6h-6z"/><use href="#bolt"/></symbol>
<symbol id="q12" viewBox="0 0 16 16"><path fill="#4a86c0" d="M0 0h4v4H0zM0 6h4v4H0zM0 12h4v4H0z"/><path fill="none" stroke="#333" d="M5 .5h1.500v15H5"/><use href="#bolt"/></symbol>
<symbol id="q13" viewBox="0 0 16 16"><use href="#q12"/><path fill="#fff" stroke="#4a86c0" d="M8 1l4-1 3 4-3 3z"/></symbol>
<symbol id="q14" viewBox="0 0 16 16"><path fill="#d05038" d="M0 1h4v4H0z"/><path fill="#c09040" d="M5 1h4v4H5z"/><path fill="#5a9a80" d="M10 1h4v4h-4z"/><path fill="#4a86c0" d="M0 6h4v4H0z"/><path fill="#c8287d" d="M5 6h4v4H5z"/><use href="#bolt"/></symbol>
<symbol id="q15" viewBox="0 0 16 16"><path fill="#4a86c0" d="M0 3l7-3 7 3-7 3zM0 6l7 3 7-3v2l-7 3-7-3zM0 10l7 3 4-2v2l-4 2-7-3z"/><use href="#bolt"/></symbol>
<symbol id="q16" viewBox="0 0 16 16"><use href="#no" width="14" height="14"/><use href="#bolt"/></symbol>
<!-- rectangle ribbon -->
<symbol id="r1" viewBox="0 0 20 20"><path fill="none" stroke="#dd2200" stroke-width="2" d="M3 13V3h10M17 8v10H8"/><path stroke="#556" stroke-width="2" d="M16 0v6M13 3h6M10 7v6M7 10h6M3 14v6M0 17h6"/></symbol>
<symbol id="r2" viewBox="0 0 20 20"><path fill="#f30" d="M3 6h4v3h3v4H7v3H3v-3H0V9h3z"/><path fill="#c4c8e4" stroke="#223" d="M11.500 4l4-3h2v16h2v2h-7v-2h2V4h-3z"/></symbol>
<symbol id="r3" viewBox="0 0 20 20"><path fill="#f30" d="M3 6h4v3h3v4H7v3H3v-3H0V9h3z"/><path fill="#c4c8e4" stroke="#223" d="M9.500 6c0-7 10-7 10 0 0 4-4 6-6 9h6v4h-10v-3c2-4 6-6 6-10 0-2-3-2-3 1z"/></symbol>
<symbol id="r4" viewBox="0 0 20 20"><path fill="#99a" stroke="#223" d="M3 4h8V1l6 5-6 5V8H3z"/><path fill="none" stroke="#dd2200" stroke-width="2" d="M1 11v8h18v-8M5 15v4M10 13v6M14 15v4"/></symbol>
<symbol id="r5" viewBox="0 0 20 20"><path fill="#99a" stroke="#223" d="M3 19V9H1l4-6 4 6H7v10z"/><path fill="none" stroke="#dd2200" stroke-width="2" d="M11 1h7v18h-7M14 5h4M12 10h6M14 14h4"/></symbol>
<symbol id="r6" viewBox="0 0 20 20"><rect x="2" y="1" width="17" height="18" rx="1" fill="none" stroke="#dd2200" stroke-width="2"/><path fill="#88b" stroke="#557" d="M8.500 5.500h4v3h3v4h-3v3h-4v-3h-3v-4h3z"/></symbol>
<symbol id="r7" viewBox="0 0 20 20"><rect x="2" y="1" width="17" height="18" rx="1" fill="none" stroke="#dd2200" stroke-width="2"/><path stroke="#dd2200" stroke-width="2" d="M10 1v18M2 10h17"/></symbol>
<symbol id="r8" viewBox="0 0 20 20"><circle cx="10" cy="10" r="9.500" fill="#0a5cc8" stroke="#035"/><path stroke="#fff" stroke-width="4" d="M10 4v12M4 10h12"/></symbol>
<symbol id="r9" viewBox="0 0 20 20"><path fill="#3ccf1e" stroke="#167008" d="M1 10l3-1 3 4L17 0l1 2-10 17H6z"/></symbol>
<symbol id="r10" viewBox="0 0 20 20"><path fill="none" stroke="#333" stroke-width="5" d="M4 6c0-6 12-5 12 0 0 3-6 4-6 8"/><path fill="none" stroke="#b8bccc" stroke-width="3" d="M4 6c0-6 12-5 12 0 0 3-6 4-6 7"/><circle cx="10" cy="18" r="1.500" fill="#aab" stroke="#333"/></symbol>
</defs>
</svg>

<header class="titlebar">
<svg class="logo" viewBox="0 0 18 20"><path fill="#222" d="M0 0h5l5 9-7 11H0l5-10z"/><path fill="#999" d="M7 12l3-4 7 12h-5z"/><path fill="#444" d="M13 0h5l-7 10-2-3z"/><path fill="#e8a820" d="M14 4l3-1-3 6h2l-4 6 1-5h-2z"/></svg>
<h1>Mastercam 设计 X9</h1>
<div class="winbtns">
<button aria-label="最小化"><svg viewBox="0 0 12 12"><path stroke="#333" stroke-width="2" d="M2 10h8"/></svg></button>
<button aria-label="还原"><svg viewBox="0 0 12 12"><path fill="none" stroke="#333" d="M3.500 3V1.500h7v6H9M1.500 4.500h7v6h-7zM1.500 5.500h7"/></svg></button>
<button aria-label="关闭"><svg viewBox="0 0 12 12"><path stroke="#333" d="M1 1l10 10M11 1L1 11"/></svg></button>
</div>
</header>
<nav class="menubar">
<button>文件(F)</button><button>编辑(E)</button><button>视图(V)</button><button>分析(A)</button><button>绘图(C)</button><button>实体(S)</button><button>建模(P)</button><button>转换(X)</button><button>机床类型(M)</button><button>刀路(T)</button><button>屏幕(R)</button><button>设置(I)</button><button>帮助(H)</button>
</nav>

<div class="bar" role="toolbar" aria-label="标准">
<i class="grip"></i>
<button class="t" aria-label="新建"><svg><use href="#new"/></svg></button>
<button class="t" aria-label="打开"><svg><use href="#open"/></svg></button>
<button class="t" aria-label="保存"><svg><use href="#save"/></svg></button>
<button class="t" aria-label="打印"><svg><use href="#print"/></svg></button>
<button class="t" aria-label="打印预览"><svg><use href="#preview"/></svg></button>
<i class="grip"></i>
<button class="t dim" aria-label="撤销"><svg><use href="#undo"/></svg></button>
<button class="t dim" aria-label="重做"><svg><use href="#redo"/></svg></button>
<i class="grip"></i>
<button class="t" aria-label="适度化"><svg><use href="#fit"/></svg></button>
<button class="t" aria-label="重画"><svg><use href="#repaint"/></svg></button>
<i class="sep"></i>
<button class="t" aria-label="视窗放大"><svg><use href="#zoomwin"/></svg></button>
<button class="t" aria-label="目标放大"><svg><use href="#zoomtgt"/></svg></button>
<button class="t" aria-label="选择放大"><svg><use href="#zoomsel"/></svg></button>
<i class="sep"></i>
<button class="t" aria-label="上一缩放"><svg><use href="#unzoom"/></svg></button>
<button class="t" aria-label="缩小"><svg><use href="#zoomout"/></svg></button>
<i class="sep"></i>
<button class="t" aria-label="动态旋转"><svg><use href="#rot1"/></svg></button>
<button class="t" aria-label="上一视图"><svg><use href="#rot2"/></svg></button>
<button class="t" aria-label="指定视图"><svg><use href="#rot3"/></svg></button>
<i class="grip"></i>
<button class="t" aria-label="俯视图"><svg><use href="#vtop"/></svg></button>
<button class="t" aria-label="前视图"><svg><use href="#vfront"/></svg></button>
<button class="t" aria-label="右视图"><svg><use href="#vright"/></svg></button>
<button class="t" aria-label="等视图"><svg><use href="#viso"/></svg></button>
<i class="grip"></i>
<button class="t" aria-label="平面"><svg><use href="#plane"/></svg></button><button class="dd" aria-label="更多"></button>
<i class="grip"></i>
<button class="t" aria-label="线架"><svg><use href="#globe"/></svg></button><button class="dd" aria-label="更多"></button>
<button class="t" aria-label="着色"><svg><use href="#ball"/></svg></button><button class="dd" aria-label="更多"></button>
<button class="t" aria-label="半透明"><svg><use href="#ballcut"/></svg></button>
<button class="t" aria-label="背面"><svg><use href="#gem"/></svg></button>
<button class="t" aria-label="隐藏"><svg><use href="#hidea"/></svg></button>
<button class="t" aria-label="恢复隐藏"><svg><use href="#hideb"/></svg></button>
<i class="grip"></i>
<button class="t" aria-label="删除"><svg><use href="#del"/></svg></button>
<button class="t" aria-label="删除重复"><svg><use href="#del2"/></svg></button><button class="dd" aria-label="更多"></button>
<i class="sep"></i>
<button class="t dim" aria-label="恢复删除"><svg><use href="#undel"/></svg></button><button class="dd dim" aria-label="更多"></button>
<i class="grip"></i>
<button class="t" aria-label="图素分析"><svg><use href="#anaent"/></svg></button>
<button class="t" aria-label="距离分析"><svg><use href="#anadist"/></svg></button>
<button class="t" aria-label="更改分析"><svg><use href="#anachg"/></svg></button>
<i class="sep"></i>
<button class="t" aria-label="系统配置"><svg><use href="#config"/></svg></button>
<button class="t" aria-label="运行应用程序"><svg><use href="#runapp"/></svg></button>
<button class="t" aria-label="统计"><svg><use href="#sigma"/></svg></button>
<button class="t wide" aria-label="视窗"><svg><use href="#grid4"/></svg></button><button class="dd" aria-label="更多"></button>
</div>

<div class="bar sketch" role="toolbar" aria-label="绘图">
<i class="grip"></i>
<button class="t" aria-label="点"><svg><use href="#point"/></svg></button><button class="dd" aria-label="更多"></button>
<button class="t" aria-label="直线"><svg><use href="#line"/></svg></button><button class="dd" aria-label="更多"></button>
<button class="t" aria-label="圆弧"><svg><use href="#circle"/></svg></button><button class="dd" aria-label="更多"></button>
<button class="t" aria-label="矩形"><svg><use href="#rect"/></svg></button><button class="dd" aria-label="更多"></button>
<button class="t" aria-label="倒圆角"><svg><use href="#fillet"/></svg></button><button class="dd" aria-label="更多"></button>
<button class="t" aria-label="曲线"><svg><use href="#spline"/></svg></button><button class="dd" aria-label="更多"></button>
<button class="t" aria-label="圆柱"><svg><use href="#cyl"/></svg></button><button class="dd" aria-label="更多"></button>
<button class="t" aria-label="曲面"><svg><use href="#surf"/></svg></button><button class="dd" aria-label="更多"></button>
<i class="grip"></i>
<button class="t" aria-label="修剪"><svg><use href="#trim"/></svg></button>
<button class="t" aria-label="打断"><svg><use href="#break"/></svg></button><button class="dd" aria-label="更多"></button>
<i class="grip"></i>
<button class="t" aria-label="动态转换"><svg><use href="#xdyn"/></svg></button>
<button class="t" aria-label="平移"><svg><use href="#xmove"/></svg></button>
<button class="t" aria-label="旋转"><svg><use href="#xrot"/></svg></button>
<button class="t" aria-label="镜像"><svg><use href="#xmir"/></svg></button>
<button class="t" aria-label="比例缩放"><svg><use href="#xscale"/></svg></button>
<button class="t" aria-label="移动到原点"><svg><use href="#xorigin"/></svg></button>
<button class="t" aria-label="补正"><svg><use href="#xoff"/></svg></button>
<button class="t" aria-label="投影"><svg><use href="#xproj"/></svg></button>
<i class="sep"></i>
<button class="t" aria-label="缠绕"><svg><use href="#xwrap"/></svg></button><button class="dd" aria-label="更多"></button>
<button class="t" aria-label="阵列"><svg><use href="#xarr"/></svg></button>
<button class="t" aria-label="拉伸"><svg><use href="#xstr"/></svg></button><button class="dd" aria-label="更多"></button>
<i class="grip"></i>
<button class="t" aria-label="快速标注"><svg><use href="#smart"/></svg></button>
<button class="t" aria-label="注释"><svg><use href="#note"/></svg></button>
<i class="sep"></i>
<button class="t" aria-label="水平标注"><svg><use href="#dimh"/></svg></button><button class="dd" aria-label="更多"></button>
<button class="t" aria-label="坐标标注"><svg><use href="#dimv"/></svg></button><button class="dd" aria-label="更多"></button>
<i class="sep"></i>
<button class="t" aria-label="剖面线"><svg><use href="#hatch"/></svg></button><button class="dd" aria-label="更多"></button>
<i class="grip"></i>
<button class="t" aria-label="网格曲面"><svg><use href="#s1"/></svg></button>
<button class="t" aria-label="直纹曲面"><svg><use href="#s2"/></svg></button>
<button class="t" aria-label="旋转曲面"><svg><use href="#s3"/></svg></button>
<button class="t" aria-label="扫描曲面"><svg><use href="#s4"/></svg></button>
<button class="t" aria-label="拔模曲面"><svg><use href="#s5"/></svg></button><button class="dd" aria-label="更多"></button>
<i class="sep"></i>
<button class="t" aria-label="曲面修剪"><svg><use href="#s6"/></svg></button>
<button class="t" aria-label="曲面圆角"><svg><use href="#s7"/></svg></button>
<button class="t" aria-label="由实体产生"><svg><use href="#s8"/></svg></button>
<i class="sep"></i>
<button class="t" aria-label="修剪到曲面"><svg><use href="#s9"/></svg></button><button class="dd" aria-label="更多"></button>
<button class="t" aria-label="填补内孔"><svg><use href="#s10"/></svg></button><button class="dd" aria-label="更多"></button>
<button class="t" aria-label="熔接"><svg><use href="#s11"/></svg></button><button class="dd" aria-label="更多"></button>
</div>

<div class="bar coords" role="toolbar" aria-label="坐标输入">
<i class="grip"></i>
<label for="cx">X</label><span class="combo"><input id="cx" value="55.21296"><button class="dd" aria-label="X 历史"></button></span>
<label for="cy">Y</label><span class="combo"><input id="cy" value="27.43394"><button class="dd" aria-label="Y 历史"></button></span>
<label for="cz">Z</label><span class="combo"><input id="cz" value="0.0"><button class="dd" aria-label="Z 历史"></button></span>
<button class="t" aria-label="快速点"><svg><use href="#autocur"/></svg></button>
<button class="t" aria-label="光标设置"><svg><use href="#curset"/></svg></button>
<button class="t" aria-label="自动抓点"><svg><use href="#curx"/></svg></button><button class="dd" aria-label="更多"></button>
<button class="t" aria-label="帮助"><svg><use href="#help"/></svg></button>
<i class="grip wide"></i>
<button class="t dim" aria-label="串连选择"><svg><use href="#selchain"/></svg></button>
<i class="sep"></i>
<button class="t dim" aria-label="内部选择"><svg><use href="#selin"/></svg></button>
<i class="sep"></i>
<button class="t dim" aria-label="循环选择"><svg><use href="#selcyc"/></svg></button>
<i class="sep"></i>
<button class="t dim" aria-label="全部"><svg><use href="#selbox"/></svg></button><button class="dd dim" aria-label="更多"></button>
<i class="sep"></i>
<button class="t dim" aria-label="窗选"><svg><use href="#selwin"/></svg></button><button class="dd dim" aria-label="更多"></button>
<button class="t dim" aria-label="选择"><svg><use href="#cursor"/></svg></button>
<button class="t dim" aria-label="验证选择"><svg><use href="#verify"/></svg></button>
<i class="sep"></i>
<button class="t dim" aria-label="选择边"><svg><use href="#seledge"/></svg></button>
<button class="t dim" aria-label="选择面"><svg><use href="#selface"/></svg></button>
<button class="t dim" aria-label="选择主体"><svg><use href="#selbody"/></svg></button>
<i class="sep"></i>
<button class="t" aria-label="背面选择"><svg><use href="#selback"/></svg></button>
<button class="t dim" aria-label="选择上次"><svg><use href="#sellast"/></svg></button>
<i class="sep"></i>
<button class="t pressed" aria-label="延迟选择"><svg class="dim"><use href="#selwait"/></svg></button>
<button class="t dim" aria-label="选择列表"><svg><use href="#selclip"/></svg></button>
<i class="sep"></i>
<button class="t dim" aria-label="取消"><svg><use href="#no"/></svg></button>
<button class="t dim" aria-label="结束选择"><svg><use href="#ok"/></svg></button>
<button class="t dim" aria-label="选择帮助"><svg><use href="#help"/></svg></button>
</div>

<div class="work">
<aside class="side" role="toolbar" aria-label="实体">
<i class="hgrip"></i>
<button class="t" aria-label="拉伸实体"><svg><use href="#extr"/></svg></button>
<button class="t" aria-label="旋转实体"><svg><use href="#revo"/></svg></button>
<button class="t" aria-label="扫描实体"><svg><use href="#sweep"/></svg></button>
<button class="t" aria-label="举升实体"><svg><use href="#loft"/></svg></button>
<i class="hsep"></i>
<button class="t" aria-label="实体圆角"><svg><use href="#fil"/></svg></button><button class="more" aria-label="更多"></button>
<button class="t" aria-label="实体倒角"><svg><use href="#cham"/></svg></button><button class="more" aria-label="更多"></button>
<i class="hsep"></i>
<button class="t" aria-label="抽壳"><svg><use href="#shell"/></svg></button>
<button class="t" aria-label="布尔运算"><svg><use href="#bool"/></svg></button>
<button class="t" aria-label="拔模"><svg><use href="#draft"/></svg></button><button class="more" aria-label="更多"></button>
<i class="hsep"></i>
<button class="t" aria-label="推拉"><svg><use href="#push"/></svg></button>
<button class="t" aria-label="移动"><svg><use href="#move"/></svg></button><button class="more" aria-label="更多"></button>
<button class="t" aria-label="阵列特征"><svg><use href="#nodes"/></svg></button><button class="more" aria-label="更多"></button>
<button class="t" aria-label="由曲面生成"><svg><use href="#mesh"/></svg></button>
<button class="t" aria-label="查找特征"><svg><use href="#find"/></svg></button>
<button class="t" aria-label="工程图"><svg><use href="#layout"/></svg></button>
<i class="hgrip"></i>
<button class="t" aria-label="选择面组"><svg><use href="#four"/></svg></button>
<button class="t" aria-label="推拉面"><svg><use href="#p1"/></svg></button>
<button class="t" aria-label="分割实体"><svg><use href="#p2"/></svg></button>
<i class="hsep"></i>
<button class="t" aria-label="编辑实体"><svg><use href="#e1"/></svg></button>
<button class="t" aria-label="修改圆角"><svg><use href="#e2"/></svg></button>
<button class="t" aria-label="移除圆角"><svg><use href="#e3"/></svg></button>
<i class="hsep"></i>
<button class="t" aria-label="孔轴"><svg><use href="#h1"/></svg></button>
<button class="t" aria-label="移除面"><svg><use href="#h2"/></svg></button>
<button class="t" aria-label="移除历史"><svg><use href="#h3"/></svg></button>
<button class="t" aria-label="添加历史"><svg><use href="#h4"/></svg></button>
<i class="hsep"></i>
<button class="t" aria-label="面颜色"><svg><use href="#m1"/></svg></button>
<button class="t" aria-label="主体颜色"><svg><use href="#m2"/></svg></button>
<button class="t" aria-label="清除面颜色"><svg><use href="#m3"/></svg></button>
<button class="t" aria-label="清除所有颜色"><svg><use href="#m4"/></svg></button>
</aside>

<main class="center">
<div class="ribbon">
<div class="rgroup first"><button class="r" aria-label="矩形"><svg><use href="#r1"/></svg></button><i class="rline"></i><button class="r" aria-label="第一点"><svg><use href="#r2"/></svg></button><button class="r" aria-label="第二点"><svg><use href="#r3"/></svg></button></div>
<div class="rgroup">
<button class="r" aria-label="宽度"><svg><use href="#r4"/></svg></button>
<span class="rfield"><input value="66.25555" aria-label="宽度值"><button class="chev" aria-label="展开"><svg viewBox="0 0 10 6"><path fill="none" stroke="#444" d="M.5.5L5 5.500 9.500.5"/></svg></button><span class="spin"><button class="su" aria-label="增加"></button><button class="sd" aria-label="减少"></button></span></span>
<button class="r" aria-label="高度"><svg><use href="#r5"/></svg></button>
<span class="rfield"><input value="-42.27242" aria-label="高度值"><button class="chev" aria-label="展开"><svg viewBox="0 0 10 6"><path fill="none" stroke="#444" d="M.5.5L5 5.500 9.500.5"/></svg></button><span class="spin"><button class="su" aria-label="增加"></button><button class="sd" aria-label="减少"></button></span></span>
</div>
<div class="rgroup"><button class="r" aria-label="中心点定位"><svg><use href="#r6"/></svg></button><button class="r" aria-label="创建曲面"><svg><use href="#r7"/></svg></button></div>
<div class="rgroup"><button class="r" aria-label="应用"><svg><use href="#r8"/></svg></button><button class="r" aria-label="确定"><svg><use href="#r9"/></svg></button><button class="r" aria-label="帮助"><svg><use href="#r10"/></svg></button></div>
</div>
<div class="docks">
<section class="panel">
<div class="phead"><h2>刀路</h2>
<button class="caret" aria-label="菜单"></button>
<button aria-label="固定"><svg viewBox="0 0 12 12"><path fill="none" stroke="#444" d="M4.500 7V.5h4V7M7.500 1v6M2 7.500h9M6.500 8v4"/></svg></button>
<button aria-label="关闭"><svg viewBox="0 0 12 12"><path stroke="#444" d="M1 1l10 10M11 1L1 11"/></svg></button>
</div>
<div class="prow">
<button class="t dim" aria-label="选择全部操作"><svg><use href="#t1"/></svg></button>
<button class="t dim" aria-label="取消选择操作"><svg><use href="#t2"/></svg></button>
<i class="sep"></i>
<button class="t dim" aria-label="重新生成"><svg><use href="#t3"/></svg></button>
<button class="t dim" aria-label="重新生成无效"><svg><use href="#t4"/></svg></button>
<i class="sep"></i>
<button class="t dim" aria-label="模拟"><svg><use href="#t5"/></svg></button>
<button class="t dim" aria-label="验证"><svg><use href="#t6"/></svg></button>
<button class="t dim" aria-label="模拟选项"><svg><use href="#t7"/></svg></button>
<button class="t dim g1" aria-label="后处理">G1</button>
<button class="t dim" aria-label="高速进给"><svg><use href="#t9"/></svg></button>
<i class="sep"></i>
<button class="t dim" aria-label="删除操作"><svg><use href="#t10"/></svg></button>
<i class="sep"></i>
<button class="t dim" aria-label="帮助"><svg><use href="#help"/></svg></button>
</div>
<div class="prow">
<button class="t dim" aria-label="锁定"><svg><use href="#lock"/></svg></button>
<button class="t dim" aria-label="显示刀路"><svg><use href="#waves"/></svg></button>
<button class="t dim" aria-label="关闭后处理"><svg><use href="#ghost"/></svg></button>
<i class="sep"></i>
<button class="t dim" aria-label="下移"><svg><use href="#dn"/></svg></button>
<button class="t dim" aria-label="上移"><svg><use href="#up"/></svg></button>
<button class="t dim" aria-label="插入位置"><svg><use href="#ins"/></svg></button>
<button class="t dim" aria-label="滚动到插入"><svg><use href="#split"/></svg></button>
<i class="sep"></i>
<button class="t dim" aria-label="仅显示选择"><svg><use href="#w1"/></svg></button>
<button class="t dim" aria-label="仅显示关联"><svg><use href="#w2"/></svg></button>
<button class="t dim" aria-label="编辑刀路"><svg><use href="#w3"/></svg></button>
<i class="sep"></i>
<button class="t dim" aria-label="机床模拟"><svg><use href="#w4"/></svg></button>
<button class="t dim" aria-label="高级选项"><svg><use href="#w5"/></svg></button>
</div>
<div class="pbody"><div class="tree" role="tree" aria-label="刀路"></div></div>
<div class="ptabs" role="tablist"><button role="tab" aria-selected="true" class="on">刀路</button><button role="tab">实体</button></div>
</section>
<section class="stage">
<div class="canvas"><output class="prompt">选择第一个角位置</output></div>
<div class="vtabs" role="tablist"><button role="tab" aria-selected="true">主视图面板</button><span></span></div>
</section>
</div>
</main>

<aside class="side right" role="toolbar" aria-label="快速选择">
<i class="hgrip"></i>
<button class="t" aria-label="矩形"><svg><use href="#rect"/></svg></button>
<i class="gap"></i>
<i class="hgrip"></i>
<button class="t dim" aria-label="尺寸"><svg><use href="#q1"/></svg></button>
<button class="t dim" aria-label="曲面"><svg><use href="#q2"/></svg></button>
<button class="t dim" aria-label="点"><svg><use href="#q3"/></svg></button>
<button class="t dim" aria-label="线"><svg><use href="#q4"/></svg></button>
<button class="t dim" aria-label="弧"><svg><use href="#q5"/></svg></button>
<button class="t dim" aria-label="曲线"><svg><use href="#q6"/></svg></button>
<button class="t dim" aria-label="曲面曲线"><svg><use href="#q7"/></svg></button>
<button class="t dim" aria-label="实体"><svg><use href="#q8"/></svg></button>
<button class="t dim" aria-label="线架"><svg><use href="#q9"/></svg></button>
<button class="t dim" aria-label="清除"><svg><use href="#no"/></svg></button>
<i class="hsep"></i>
<button class="t dim" aria-label="颜色"><svg><use href="#q11"/></svg></button>
<button class="t dim" aria-label="群组"><svg><use href="#q12"/></svg></button>
<button class="t dim" aria-label="命名群组"><svg><use href="#q13"/></svg></button>
<i class="hsep"></i>
<button class="t dim" aria-label="按颜色"><svg><use href="#q14"/></svg></button>
<button class="t dim" aria-label="按层别"><svg><use href="#q15"/></svg></button>
<button class="t dim" aria-label="清除所有"><svg><use href="#q16"/></svg></button>
<i class="hsep"></i>
</aside>
</div>

<footer class="status">
<p>WCS: 俯视图&nbsp; 刀具/绘图平面: 俯视图</p>
<button class="w31 mono">2D</button>
<button class="w76">屏幕视图</button>
<button class="w55 mono">WCS</button>
<button class="w32">平面</button>
<label class="w17" for="sz">Z</label>
<span class="szbox"><input id="sz" value="0.0"><button class="chev" aria-label="展开"><svg viewBox="0 0 10 6"><path fill="none" stroke="#444" d="M.5.5L5 5.500 9.500.5"/></svg></button></span>
<button class="color green" aria-label="线架颜色"><svg viewBox="0 0 12 10"><path fill="none" stroke="#333" d="M1.500.5h5v6h-5zM4.500 3.500h5v6h-5z"/></svg></button>
<button class="color grey" aria-label="实体颜色"><svg viewBox="0 0 12 10"><path fill="#888" d="M6 0l5 2v6l-5 2-5-2V2z"/><path fill="#444" d="M11 2L6 4v6l5-2z"/></svg></button>
<button class="color orange" aria-label="曲面颜色"><svg viewBox="0 0 12 10"><path fill="#ccc" stroke="#444" d="M2.500 1.500l8-1v8l-9 1zM6.500 1v8M2 5.500l8-1"/></svg></button>
<label class="w36" for="lv">层别</label>
<span class="lvbox"><select id="lv"><option>1</option></select><svg viewBox="0 0 10 6"><path fill="none" stroke="#444" d="M.5.5L5 5.500 9.500.5"/></svg></span>
<button class="w40">属性</button>
<button class="w52 drop" aria-label="点样式"><svg viewBox="0 0 10 10" class="star"><path stroke="#000" d="M4.500 0v10M0 5.500h9M1 9l7-7"/></svg></button>
<button class="w74 drop" aria-label="线宽"><i class="thick"></i></button>
<button class="w83 drop" aria-label="线型"><i class="thin"></i></button>
<button class="w48">群组</button>
<button class="w23 mono">?</button>
</footer>

<div class="gadget" aria-hidden="true"><i></i></div>
<div class="ime"><svg class="leaf" viewBox="0 0 162 38"><path fill="#f0e9cc" d="M12 0h58C45 8 50 25 36 38H12Q0 36 0 19T12 0zM128 0h22q12 4 12 19 0 16-14 19 2-28-20-38z"/><g fill="none" stroke="#a9c09c" stroke-width="2" opacity=".7"><path d="M104 11q14-2 26 1l14 2M118 34q2-10 5-20M112 20l14-8M130 10l-8-8M134 10l12-6M132 8l6-7M128 14l-14 10M142 35l16 3"/></g></svg><span>中</span><span>半</span><span>简</span><svg class="shirt" viewBox="0 0 18 20"><path fill="#8aa583" d="M4 1q5 4 10 0l4 5-3 4-1-1v10H4V9l-1 1-3-4z"/></svg></div>
<div class="mark">
<svg viewBox="0 0 72 82"><path fill="#d5eefb" d="M36 0l16 9 4 18-26-9-30 3z"/><path fill="#b8e5fb" d="M0 21q20-8 36-2l-18 11-2 20-16 4z"/><path fill="#8fd5f7" d="M51 8l21 12v41q-10 5-20 0l4-20q0-20-5-33z"/><path fill="#9ad6f3" d="M0 21l16 9 1 24q6 8 19 28L0 61z" opacity=".8"/><path fill="#6cc5ee" d="M17 54q12 10 38 8 10 0 17-2L36 82q-18-12-19-28z"/><path fill="none" stroke="#fff" d="M0 22q20-8 36-2M51 8q6 12 5 33M72 60q-20 4-36-1M36 81q-18-12-19-28M0 56q8-20 30-30"/><path fill="#fff" d="M36 18l20 11v24L36 64 16 53V29z"/><path fill="#bfe5f9" d="M36 23l15 9-15 9-15-9z"/><path fill="#85cbee" d="M20 32l16 9v18l-16-9z"/><path fill="#6cc1ea" d="M52 32l-16 9v18l16-9z"/></svg>
<p><b>3D世界网</b><span>WWW.3DSJW.COM</span></p>
</div>
</body>
</html>
```
FILE: styles.css
```css
* { box-sizing: border-box; }
html, body { height: 100%; }
body {
  margin: 0;
  display: flex;
  flex-direction: column;
  overflow: hidden;
  background: #f0f0f0;
  color: #222;
  font: 14px/20px "Noto Sans", "Noto Sans CJK SC", sans-serif;
}
button, input, select { font: inherit; color: inherit; border: 0; padding: 0; margin: 0; background: none; border-radius: 0; }
h1, h2, p { margin: 0; font-weight: 400; }
i { display: block; flex: none; font-style: normal; }
.sprite { position: absolute; width: 0; height: 0; }

.titlebar { flex: none; height: 27px; display: flex; align-items: center; padding: 0 8px 0 3px; }
.logo { width: 18px; height: 20px; margin-right: 8px; }
h1 { flex: 1; font-size: 14px; color: #444; padding-top: 2px; }
.winbtns { display: flex; gap: 16px; padding-top: 2px; }
.winbtns button { width: 16px; height: 20px; }
.winbtns svg { width: 10px; height: 10px; }

.menubar { flex: none; height: 29px; display: flex; align-items: center; gap: 1px; padding-left: 8px; }
.menubar button { padding: 0 8px; white-space: nowrap; }

.bar { flex: none; height: 29px; display: flex; align-items: center; }
.bar.coords { height: 35px; }
.t { flex: none; width: 22px; height: 22px; display: flex; align-items: center; justify-content: center; }
.t.wide { width: 26px; }
.t svg { width: 16px; height: 16px; }
.dim { opacity: .5; }
.pressed { background: #d8d8d8; }
.grip { width: 12px; height: 16px; background: repeating-linear-gradient(#c4c4c4 0 2px, #f0f0f0 2px 4px) 5px 0 / 2px 16px no-repeat; }
.grip:first-child { width: 10px; }
.sketch .grip:first-child { width: 12px; }
.grip.wide { width: 17px; }
.sep { width: 5px; height: 23px; margin-left: 3px; border-left: 1px solid #c4c4c4; }
.dd { flex: none; width: 15px; height: 22px; display: grid; place-items: center; }
.dd::after, .caret::after { content: ""; border: 4px solid transparent; border-top-color: #666; border-bottom: 0; }
.coords label { width: 26px; text-align: center; font-size: 17px; font-weight: 700; color: #000; }
.combo { width: 146px; height: 26px; display: flex; border: 1px solid #a0a0a0; background: #fff; padding: 1px; }
.combo:last-of-type { margin-right: 1px; }
.combo input { flex: 1; min-width: 0; background: #ffff80; font-size: 16px; padding-left: 1px; color: #000; }
.combo .dd { width: 17px; }

.work { flex: 1; min-height: 0; display: flex; }
.side { flex: none; width: 26px; display: flex; flex-direction: column; align-items: center; }
.side.right { width: 30px; padding: 2px 2px 0 0; }
.hgrip { width: 14px; height: 12px; background: repeating-linear-gradient(90deg, #c4c4c4 0 2px, #f0f0f0 2px 4px) 0 5px / 14px 2px no-repeat; }
.hsep { width: 22px; height: 5px; border-top: 1px solid #c0c0c0; margin-top: 3px; }
.more { flex: none; width: 22px; height: 15px; display: grid; place-items: center; }
.more::after { content: ""; border: 4px solid transparent; border-left: 5px solid #666; border-right: 0; }
.gap { height: 141px; }

.center { flex: 1; min-width: 0; display: flex; flex-direction: column; }
.ribbon { flex: none; height: 40px; padding: 9px 0 0 5px; display: flex; gap: 65px; border-bottom: 5px solid #e5e5e5; overflow: hidden; }
.rgroup { display: flex; gap: 10px; }
.rgroup.first { width: 523px; }
.r { flex: none; width: 30px; height: 30px; display: flex; justify-content: center; border: 1px solid #adadad; background: #e1e1e1; padding-top: 3px; }
.r svg { width: 20px; height: 20px; }
.rline { width: 1px; height: 30px; background: #a0a0a0; margin: 0 21px 0 -4px; }
.rfield { width: 120px; height: 24px; margin: 1px 6px 0 -1px; display: flex; border: 1px solid #777; background: #fff; }
.rfield:last-child { margin: 1px 0 0; }
.rfield input { width: 73px; height: 18px; margin: 2px 0 0 2px; background: #ffff80; font-size: 12px; color: #000; }
.chev { width: 24px; display: grid; place-items: center; }
.chev svg { width: 10px; height: 6px; }
.spin { flex: 1; border-left: 1px solid #777; display: flex; flex-direction: column; justify-content: center; align-items: center; gap: 6px; }
.su, .sd { width: 8px; height: 4px; border: 4px solid transparent; }
.su { border-bottom-color: #666; border-top: 0; }
.sd { border-top-color: #666; border-bottom: 0; }

.docks { flex: 1; min-height: 0; display: flex; gap: 4px; }
.panel { flex: none; width: 352px; display: flex; flex-direction: column; }
.phead { height: 39px; flex: none; display: flex; align-items: center; padding: 0 2px 0 4px; }
.phead h2 { flex: 1; font-size: 24px; line-height: 32px; color: #111; }
.phead button { width: 19px; height: 20px; display: grid; place-items: center; }
.phead svg { width: 11px; height: 11px; }
.caret::after { border-width: 5px; }
.prow { flex: none; height: 27px; padding-left: 2px; display: flex; align-items: center; }
.g1 { font-size: 12px; color: #3a6aa5; }
.pbody { flex: 1; min-height: 0; background: #fafafa; padding: 7px 2px 22px; display: flex; }
.tree { flex: 1; background: #fff; border: 1px solid #c0c0c0; }
.ptabs { flex: none; height: 27px; display: flex; border-top: 1px solid #e0e0e0; }
.ptabs button { height: 25px; padding: 0 5px; border: 1px solid transparent; border-top: 0; }
.ptabs .on { background: #fff; border-color: #c0c0c0; color: #444; }

.stage { flex: 1; min-width: 0; display: flex; flex-direction: column; }
.canvas { flex: 1; background: #fff; border: solid #e4e4e4; border-width: 1px 2px 1px 1px; padding: 16px; }
.prompt { display: inline-block; height: 29px; border: 1px solid #444; padding: 0 5px; font-size: 20px; line-height: 26px; color: #111; }
.vtabs { flex: none; height: 31px; margin-top: 1px; border-top: 1px solid #b8b8b8; background: #fff; display: flex; }
.vtabs button { padding: 6px 4px 0; color: #444; white-space: nowrap; }
.vtabs span { flex: 1; margin-top: 3px; border: solid #b8b8b8; border-width: 1px 0 0 1px; background: #f0f0f0; }

.status { flex: none; height: 25px; background: #5f5f5f; display: flex; gap: 2px; padding-top: 2px; }
.status p { flex: 1; padding-left: 4px; color: #fff; line-height: 22px; white-space: nowrap; }
.status > button, .status > label, .szbox, .lvbox { flex: none; height: 23px; background: #fff; border: 1px solid #ccc; color: #111; display: flex; align-items: center; justify-content: center; white-space: nowrap; }
.status .mono { font-family: "Liberation Mono", monospace; }
.status > label { background: #f0f0f0; align-items: flex-end; line-height: 16px; }
.w17 { width: 17px; } .w23 { width: 23px; } .w31 { width: 31px; } .w32 { width: 32px; } .w36 { width: 36px; }
.w40 { width: 40px; } .w48 { width: 48px; } .w52 { width: 52px; } .w55 { width: 55px; } .w74 { width: 74px; } .w76 { width: 76px; } .w83 { width: 83px; }
.szbox { width: 106px; border: 0; }
.szbox input { flex: 1; min-width: 0; height: 19px; margin-left: 2px; background: linear-gradient(#39f, #39f) 0 0 / 21px 100% no-repeat #ffff80; color: #fff; }
.status .color { width: 40px; flex-direction: column; justify-content: space-between; padding: 1px 1px 0; }
.color svg { width: 12px; height: 10px; }
.color::after { content: ""; width: 36px; height: 6px; background: #00f000; }
.grey::after { background: #808080; }
.orange::after { background: #ff8040; }
.lvbox { width: 131px; border: 0; padding-right: 5px; }
.lvbox select { flex: 1; appearance: none; padding-left: 4px; }
.lvbox svg { width: 10px; height: 6px; }
.status > .drop { justify-content: space-between; padding: 4px 7px 0 4px; }
.drop::after { content: ""; border: 4px solid transparent; border-top-color: #777; border-bottom: 0; }
.star { width: 10px; height: 10px; }
.thick { width: 47px; height: 3px; background: #000; }
.thin { width: 56px; height: 1px; background: #000; }

.gadget { position: absolute; right: 0; bottom: 59px; width: 13px; height: 74px; background: #4d4f62; border-radius: 5px 0 0 5px; }
.gadget i { position: absolute; left: 5px; bottom: 8px; width: 6px; height: 28px; background: repeating-linear-gradient(#7dc48a 0 2px, #4d4f62 2px 3px); }
.ime { position: absolute; right: 0; bottom: 89px; width: 162px; height: 38px; border-radius: 13px; background: #fcf6de; display: flex; align-items: center; padding-left: 9px; overflow: hidden; }
.ime span { position: relative; width: 24px; text-align: center; font: 700 20px/38px "Noto Serif CJK SC", "Noto Sans CJK SC", serif; color: #8aa583; }
.leaf { position: absolute; left: 0; top: 0; width: 162px; height: 38px; }
.shirt { position: relative; width: 18px; height: 20px; margin-left: 3px; }
.mark { position: absolute; right: 26px; bottom: 13px; width: 257px; height: 82px; display: flex; gap: 9px; pointer-events: none; }
.mark svg { width: 72px; height: 82px; opacity: .9; flex: none; }
.mark p { color: rgba(250, 250, 250, .5); padding-top: 4px; white-space: nowrap; }
.mark b { display: block; font-size: 38px; line-height: 50px; }
.mark span { display: block; font: 18px/20px "DejaVu Sans", sans-serif; }
```
